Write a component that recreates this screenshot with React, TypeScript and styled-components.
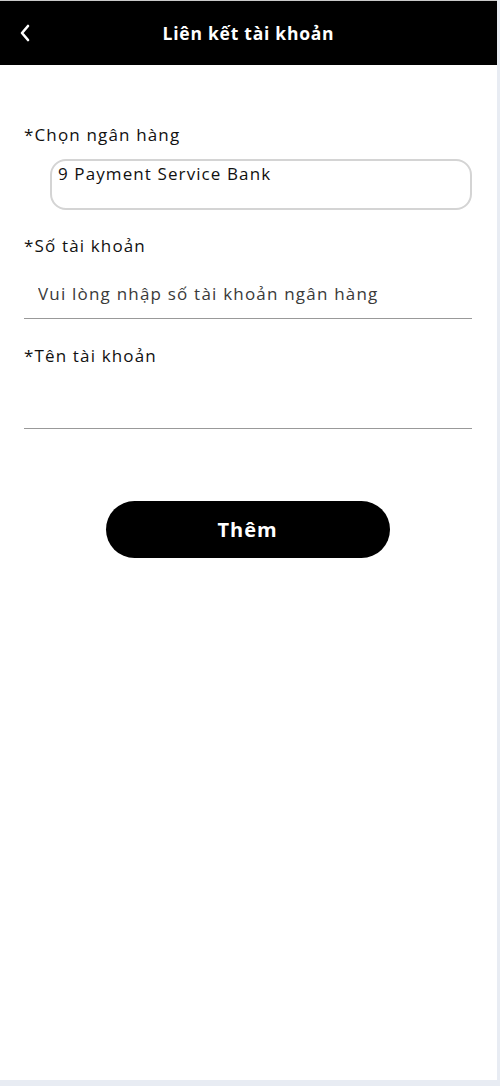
import styled, { createGlobalStyle } from "styled-components";

const GlobalStyle = createGlobalStyle`
  html, body {
    margin: 0;
    padding: 0;
    background: #e8ecf3;
    font-family: "Open Sans", "Liberation Sans", sans-serif;
  }
`;

const Screen = styled.div`
  width: 497px;
  min-height: 1080px;
  background: #ffffff;
  border-top: 1px solid #c9c9c9;
  box-sizing: border-box;
`;

const Header = styled.header`
  position: relative;
  height: 64px;
  background: #000000;
  display: flex;
  align-items: center;
  justify-content: center;
`;

const BackButton = styled.button`
  position: absolute;
  left: 14px;
  top: 50%;
  transform: translateY(-50%);
  width: 22px;
  height: 30px;
  padding: 0;
  border: none;
  background: transparent;
  display: flex;
  align-items: center;
  justify-content: center;
  cursor: pointer;
`;

const Title = styled.h1`
  margin: 0;
  color: #ffffff;
  font-size: 17.5px;
  font-weight: 700;
  letter-spacing: 0.75px;
`;

const Form = styled.form`
  display: flex;
  flex-direction: column;
  padding: 59px 25px 0 24px;
`;

const Field = styled.div<{ $gap?: number }>`
  display: flex;
  flex-direction: column;
  margin-bottom: ${(p) => p.$gap ?? 0}px;
`;

const Label = styled.label`
  font-size: 17px;
  line-height: 22px;
  letter-spacing: 1.15px;
  color: #111111;
`;

const SelectBox = styled.div`
  margin: 13px 0 0 26px;
  height: 51px;
  border: 2px solid #d4d4d4;
  border-radius: 16px;
  box-sizing: border-box;
  padding: 1px 0 0 6px;
  font-size: 17px;
  letter-spacing: 1.1px;
  color: #111111;
`;

const LineInput = styled.input`
  margin-top: 13px;
  height: 49px;
  box-sizing: border-box;
  border: none;
  border-bottom: 1px solid #999999;
  padding: 0 0 2px 14px;
  font-family: inherit;
  font-size: 17px;
  letter-spacing: 1.2px;
  color: #111111;
  background: transparent;
  outline: none;
  &::placeholder {
    color: #3a3a3a;
  }
`;

const SubmitButton = styled.button`
  align-self: center;
  margin: 72px 0 0 -1px;
  width: 284px;
  height: 57px;
  border: none;
  border-radius: 29px;
  background: #000000;
  color: #ffffff;
  font-family: inherit;
  font-size: 20px;
  font-weight: 700;
  letter-spacing: 1px;
  cursor: pointer;
`;

export default function App() {
  return (
    <>
      <GlobalStyle />
      <Screen>
        <Header>
          <BackButton type="button" aria-label="Quay lại">
            <svg width="12" height="18" viewBox="0 0 12 18" fill="none">
              <path d="M9 2L3 9l6 7" stroke="#fff" strokeWidth="2.6" strokeLinecap="round" strokeLinejoin="round" />
            </svg>
          </BackButton>
          <Title>Liên kết tài khoản</Title>
        </Header>
        <Form onSubmit={(e) => e.preventDefault()}>
          <Field $gap={25}>
            <Label>*Chọn ngân hàng</Label>
            <SelectBox>9 Payment Service Bank</SelectBox>
          </Field>
          <Field $gap={26}>
            <Label>*Số tài khoản</Label>
            <LineInput placeholder="Vui lòng nhập số tài khoản ngân hàng" />
          </Field>
          <Field>
            <Label>*Tên tài khoản</Label>
            <LineInput />
          </Field>
          <SubmitButton type="submit">Thêm</SubmitButton>
        </Form>
      </Screen>
    </>
  );
}
